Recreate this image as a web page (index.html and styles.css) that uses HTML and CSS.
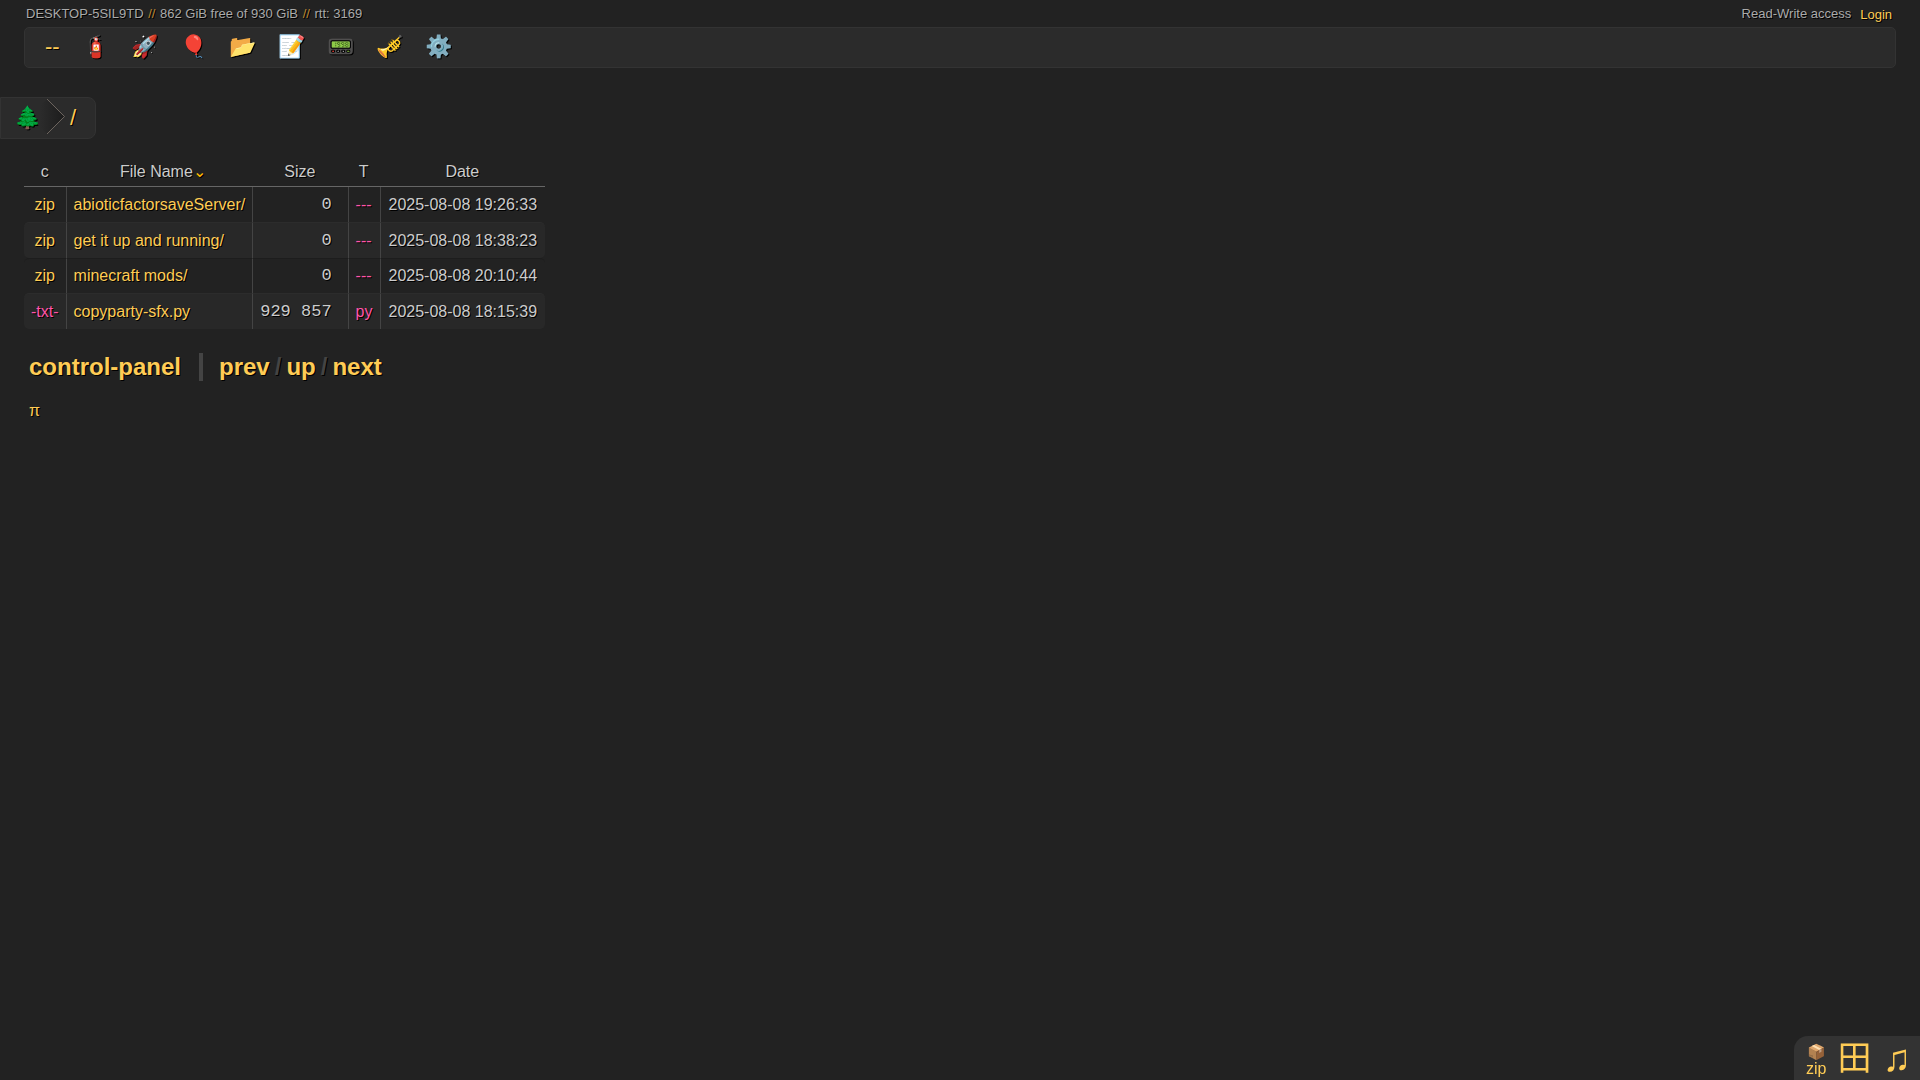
FILE: index.html
```html
<!DOCTYPE html>
<html lang="en">
<head>
<meta charset="utf-8">
<title>/</title>
<link rel="stylesheet" href="styles.css">
</head>
<body>
<header class="status">
  <p class="info">DESKTOP-5SIL9TD <span class="sep">//</span> 862 GiB free of 930 GiB <span class="sep">//</span> rtt: 3169</p>
  <p class="account">Read-Write access <a class="login" href="#login">Login</a></p>
</header>
<nav class="ops" aria-label="Tools">
  <a href="#none">--</a>
  <a href="#unpost">🧯</a>
  <a href="#upload">🚀</a>
  <a href="#bup">🎈</a>
  <a href="#mkdir">📂</a>
  <a href="#newmd">📝</a>
  <a href="#msg">📟</a>
  <a href="#player">🎺</a>
  <a href="#config">⚙️</a>
</nav>
<nav class="path" aria-label="Path">
  <a class="tree" href="#tree">🌲</a>
  <svg class="chevron" width="27" height="37" viewBox="0 0 27 37" aria-hidden="true">
    <defs><linearGradient id="shade" x1="0" x2="1" y1="0" y2="0"><stop offset="0.1" stop-color="#2b2b2b"/><stop offset="1" stop-color="#1c1c1c"/></linearGradient></defs>
    <path d="M9 1L26.500 18.500L9 36L0 27V10Z" fill="url(#shade)"/>
    <path d="M9 1L26.500 18.500L9 36" fill="none" stroke="#6c645e"/>
  </svg>
  <a class="root" href="#root">/</a>
</nav>
<main>
  <table class="files">
    <thead>
      <tr><th>c</th><th>File Name<span class="sort">⌄</span></th><th>Size</th><th>T</th><th>Date</th></tr>
    </thead>
    <tbody>
      <tr><td><a href="#z1">zip</a></td><td><a href="#d1">abioticfactorsaveServer/</a></td><td class="size">0</td><td class="type">---</td><td>2025-08-08 19:26:33</td></tr>
      <tr><td><a href="#z2">zip</a></td><td><a href="#d2">get it up and running/</a></td><td class="size">0</td><td class="type">---</td><td>2025-08-08 18:38:23</td></tr>
      <tr><td><a href="#z3">zip</a></td><td><a href="#d3">minecraft mods/</a></td><td class="size">0</td><td class="type">---</td><td>2025-08-08 20:10:44</td></tr>
      <tr><td><a class="txt" href="#t4">-txt-</a></td><td><a href="#f4">copyparty-sfx.py</a></td><td class="size">929 857</td><td class="type">py</td><td>2025-08-08 18:15:39</td></tr>
    </tbody>
  </table>
  <nav class="pager" aria-label="Folders">
    <a class="panel" href="#panel">control-panel</a>
    <span class="siblings"><a href="#prev">prev</a><i>/</i><a href="#up">up</a><i>/</i><a href="#next">next</a></span>
  </nav>
  <a class="pi" href="#pi">π</a>
</main>
<aside class="widget">
  <a class="zip" href="#zip"><span class="box">📦</span><span>zip</span></a>
  <a class="grid" href="#grid">田</a>
  <a class="music" href="#music">♫</a>
</aside>
</body>
</html>
```
FILE: styles.css
```css
* { box-sizing: border-box; }
body {
  margin: 0;
  background: #222;
  color: #ccc;
  font: 16px/20px "Liberation Sans", "Noto Sans CJK SC", sans-serif;
  text-shadow: 1px 1px 0 #000;
}
a { color: #fc5; text-decoration: none; }
p { margin: 0; }

.status {
  display: flex;
  justify-content: space-between;
  height: 27px;
  padding: 4px 28px 0 26px;
  font-size: 13px;
  color: #aaa;
}
.sep { margin: 0 1px; color: #b83; }
.account { display: flex; gap: 9px; }
.login { padding-top: 1px; }

.ops {
  display: flex;
  margin: 0 24px;
  padding: 0 9px 1px;
  background: #2b2b2b;
  border: 1px solid #333;
  border-radius: 5px;
  font-size: 22px;
  line-height: 38px;
}
.ops a { padding: 0 11px; }

.path {
  display: flex;
  width: max-content;
  margin-top: 29px;
  padding: 0 19px 0 13px;
  background: #2b2b2b;
  border: 1px solid #333;
  border-radius: 0 8px 8px 0;
  font-size: 22px;
  line-height: 40px;
}
.chevron { display: block; margin-left: -3px; }
.root { padding-left: 5px; }

main { padding: 19px 24px; }
.files { border-collapse: separate; border-spacing: 0; }
.files th {
  height: 29px;
  padding: 0 7px;
  font-weight: normal;
  border-bottom: 1px solid #666;
}
.files td { height: 35px; padding: 0 7px; border-top: 1px solid #1d1d1d; }
.files tbody tr:first-child td { border-top: 0; }
.files td + td { border-left: 1px solid #444; }
.files td:first-child { text-align: center; }
.files tbody tr:nth-child(even) td { height: 36px; background: #282828; border-top-color: #2c2c2c; }
.files td:first-child { border-radius: 5px 0 0 5px; }
.files td:last-child { padding: 0 8px; border-radius: 0 5px 5px 0; }
.files .size {
  padding-right: 16px;
  text-align: right;
  font-family: "Liberation Mono", monospace;
  font-size: 17px;
}
.files .type, .files .txt { color: #f5a; }
.sort { margin-right: -8px; color: #fb0; }

.pager {
  display: flex;
  align-items: center;
  margin: 24px 5px 0;
  font-size: 24px;
  line-height: 28px;
  font-weight: bold;
}
.siblings {
  display: flex;
  gap: 5px;
  margin-left: 18px;
  padding-left: 16px;
  border-left: 4px solid #444;
}
.siblings i { color: #444; font-style: normal; }
.pi { display: block; width: max-content; margin: 20px 5px; }

.widget {
  position: fixed;
  right: 0;
  bottom: 0;
  display: flex;
  align-items: center;
  gap: 11px;
  height: 44px;
  padding: 0 9px 0 12px;
  background: #333;
  border-radius: 14px 0 0 0;
  text-shadow: none;
}
.zip { display: flex; flex-direction: column; align-items: center; padding-top: 4px; line-height: 17px; }
.box { font-size: 15px; }
.grid { font-size: 34px; line-height: 44px; }
.music { font-size: 38px; line-height: 44px; }
```
